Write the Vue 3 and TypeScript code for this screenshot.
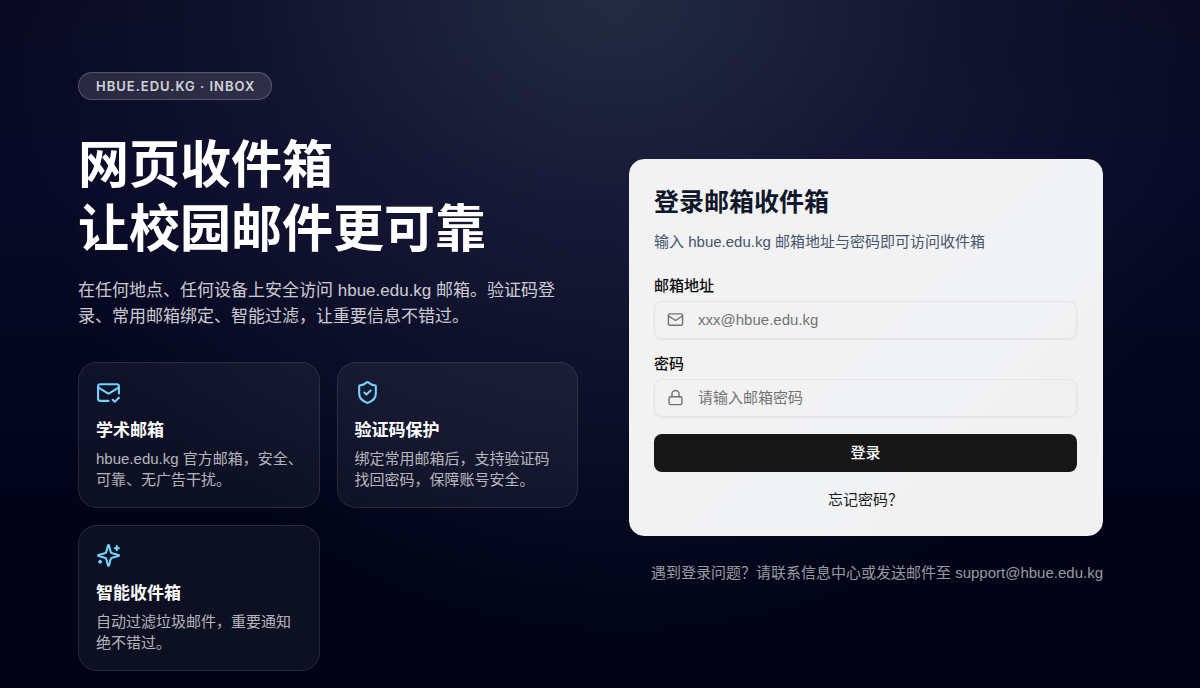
<script setup lang="ts">
import { ref } from 'vue'

interface Feature {
  title: string
  text: string
  paths: string[]
}

const email = ref('')
const password = ref('')

const features: Feature[] = [
  {
    title: '学术邮箱',
    text: 'hbue.edu.kg 官方邮箱，安全、可靠、无广告干扰。',
    paths: [
      'M22 13V6a2 2 0 0 0-2-2H4a2 2 0 0 0-2 2v12c0 1.1.9 2 2 2h8',
      'm22 7-8.97 5.7a1.94 1.94 0 0 1-2.06 0L2 7',
      'm16 19 2 2 4-4',
    ],
  },
  {
    title: '验证码保护',
    text: '绑定常用邮箱后，支持验证码找回密码，保障账号安全。',
    paths: [
      'M20 13c0 5-3.5 7.5-7.66 8.95a1 1 0 0 1-.67-.01C7.5 20.5 4 18 4 13V6a1 1 0 0 1 1-1c2 0 4.5-1.2 6.24-2.72a1.17 1.17 0 0 1 1.52 0C14.51 3.81 17 5 19 5a1 1 0 0 1 1 1z',
      'm9 12 2 2 4-4',
    ],
  },
  {
    title: '智能收件箱',
    text: '自动过滤垃圾邮件，重要通知绝不错过。',
    paths: [
      'M9.937 15.5A2 2 0 0 0 8.5 14.063l-6.135-1.582a.5.5 0 0 1 0-.962L8.5 9.936A2 2 0 0 0 9.937 8.5l1.582-6.135a.5.5 0 0 1 .963 0L14.063 8.5A2 2 0 0 0 15.5 9.937l6.135 1.581a.5.5 0 0 1 0 .964L15.5 14.063a2 2 0 0 0-1.437 1.437l-1.582 6.135a.5.5 0 0 1-.963 0z',
      'M20 3v4',
      'M22 5h-4',
      'M4 17v2',
      'M5 18H3',
    ],
  },
]
</script>

<template>
  <main class="page">
    <section class="intro">
      <span class="pill">HBUE.EDU.KG · INBOX</span>
      <h1>网页收件箱<br />让校园邮件更可靠</h1>
      <p class="lead">
        在任何地点、任何设备上安全访问 hbue.edu.kg 邮箱。验证码登录、常用邮箱绑定、智能过滤，让重要信息不错过。
      </p>
      <div class="features">
        <article v-for="f in features" :key="f.title" class="feature">
          <svg class="feature-icon" viewBox="0 0 24 24" aria-hidden="true">
            <path v-for="d in f.paths" :key="d" :d="d" />
          </svg>
          <h2>{{ f.title }}</h2>
          <p>{{ f.text }}</p>
        </article>
      </div>
    </section>

    <section class="side">
      <form class="login" @submit.prevent>
        <h2>登录邮箱收件箱</h2>
        <p class="hint">输入 hbue.edu.kg 邮箱地址与密码即可访问收件箱</p>
        <label for="email">邮箱地址</label>
        <div class="field">
          <svg viewBox="0 0 24 24" aria-hidden="true">
            <rect x="2" y="4" width="20" height="16" rx="2" />
            <path d="m22 7-8.991 5.727a2 2 0 0 1-2.009 0L2 7" />
          </svg>
          <input id="email" v-model="email" type="email" placeholder="xxx@hbue.edu.kg" />
        </div>
        <label for="password">密码</label>
        <div class="field">
          <svg viewBox="0 0 24 24" aria-hidden="true">
            <rect x="3" y="11" width="18" height="11" rx="2" />
            <path d="M7 11V7a5 5 0 0 1 10 0v4" />
          </svg>
          <input id="password" v-model="password" type="password" placeholder="请输入邮箱密码" />
        </div>
        <button type="submit">登录</button>
        <a class="forgot" href="#">忘记密码？</a>
      </form>
      <p class="support">遇到登录问题？请联系信息中心或发送邮件至 support@hbue.edu.kg</p>
    </section>
  </main>
</template>

<style>
body {
  background: #010418;
}
</style>

<style scoped>
.page {
  box-sizing: border-box;
  min-height: 100vh;
  display: grid;
  grid-template-columns: 1.055fr 1fr;
  gap: 51px;
  align-items: center;
  align-content: start;
  padding: 72px 97px 17px 78px;
  font-family: "Liberation Sans", "Noto Sans CJK SC", sans-serif;
  font-size: 15px;
  line-height: 21px;
  color: #fff;
  background:
    radial-gradient(ellipse 30% 30% at 50% 0%, rgba(40, 58, 70, 0.35), transparent 100%),
    radial-gradient(ellipse 52% 92% at 52% 0%, rgba(34, 38, 66, 0.85), rgba(28, 31, 60, 0.6) 45%, transparent 100%),
    linear-gradient(180deg, #080920 0%, #080928 25%, #050720 48%, #010418 72%, #010416 100%);
}

h1,
h2,
p {
  margin: 0;
}

svg {
  display: block;
  fill: none;
  stroke: currentColor;
  stroke-width: 2;
  stroke-linecap: round;
  stroke-linejoin: round;
}

.intro {
  min-width: 0;
}

.pill {
  box-sizing: border-box;
  display: block;
  width: fit-content;
  height: 28px;
  padding: 0 16px 0 17px;
  border: 1px solid rgba(255, 255, 255, 0.2);
  border-radius: 14px;
  background: rgba(255, 255, 255, 0.12);
  color: rgba(255, 255, 255, 0.8);
  font-family: Inter, sans-serif;
  font-size: 13px;
  font-weight: 600;
  line-height: 26px;
  letter-spacing: 1px;
}

h1 {
  margin-top: 34px;
  font-size: 51px;
  font-weight: 700;
  line-height: 64px;
}

.lead {
  margin-top: 16px;
  font-size: 17px;
  line-height: 26px;
  color: rgba(255, 255, 255, 0.8);
}

.features {
  display: grid;
  grid-template-columns: 1fr 1fr;
  gap: 17px;
  margin-top: 32px;
}

.feature {
  padding: 17px 14px 17px 17px;
  border: 1px solid rgba(255, 255, 255, 0.1);
  border-radius: 19px;
  background: rgba(255, 255, 255, 0.05);
}

.feature-icon {
  width: 25px;
  height: 25px;
  color: #74d4ff;
}

.feature h2 {
  margin: 13px 0 4px;
  font-size: 17px;
  font-weight: 600;
  line-height: 26px;
}

.feature p {
  color: rgba(255, 255, 255, 0.7);
}

.side {
  padding-bottom: 2px;
}

.login {
  display: flex;
  flex-direction: column;
  padding: 25px 25px 25px 24px;
  border: 1px solid #f2f2f3;
  border-radius: 15px;
  background: linear-gradient(135deg, #f2f2f3 45%, #f1f3f5 60%, #f1f1f2 75%);
  color: #0a0a0a;
}

.login h2 {
  color: #0f172b;
  font-size: 25px;
  font-weight: 600;
  line-height: 34px;
}

.hint {
  margin: 12px 0 23px;
  color: #45556c;
}

label {
  width: fit-content;
  margin-bottom: 5px;
  font-family: Inter, "Noto Sans CJK SC", sans-serif;
  font-weight: 500;
}

.field {
  box-sizing: border-box;
  display: flex;
  align-items: center;
  height: 38px;
  margin-bottom: 14px;
  padding: 0 12px;
  border: 1px solid #e5e5e7;
  border-radius: 8px;
  box-shadow: 0 1px 2px rgba(0, 0, 0, 0.06);
  color: #737373;
}

.field svg {
  flex: none;
  width: 17px;
  height: 17px;
}

.field input {
  flex: 1;
  min-width: 0;
  margin-left: 14px;
  padding: 0;
  border: 0;
  outline: 0;
  background: none;
  color: #0a0a0a;
  font: inherit;
}

.field input::placeholder {
  color: #737373;
  opacity: 1;
}

button {
  height: 38px;
  margin-top: 3px;
  border: 0;
  border-radius: 8px;
  background: #171717;
  color: #fafafa;
  font: inherit;
  font-weight: 500;
}

.forgot {
  align-self: center;
  margin-top: 17px;
  color: #171717;
  text-decoration: none;
}

.support {
  margin-top: 26px;
  text-align: right;
  color: rgba(255, 255, 255, 0.6);
}
</style>
